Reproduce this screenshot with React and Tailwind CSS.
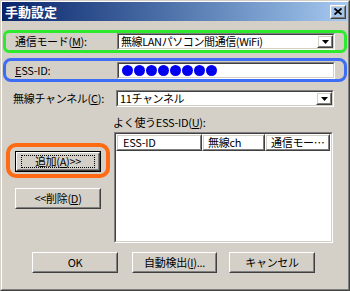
// 手動設定 dialog — Windows classic style, with annotation outlines

const FONT = "font-['Noto_Sans_CJK_JP','Noto_Sans',sans-serif]";

function Raised({ className = '', innerClassName = '', children }) {
  return (
    <div className={`border border-t-white border-l-white border-r-[#404040] border-b-[#404040] ${className}`}>
      <div className={`h-full w-full border border-t-[#d4d0c8] border-l-[#d4d0c8] border-r-[#808080] border-b-[#808080] flex items-center justify-center ${innerClassName}`}>
        {children}
      </div>
    </div>
  );
}

function Sunken({ className = '', children }) {
  return (
    <div className={`border border-t-[#808080] border-l-[#808080] border-r-white border-b-white ${className}`}>
      <div className="h-full w-full border border-t-[#404040] border-l-[#404040] border-r-[#d4d0c8] border-b-[#d4d0c8] bg-white flex items-center overflow-hidden">
        {children}
      </div>
    </div>
  );
}

function Combo({ value }) {
  return (
    <Sunken className="w-[218px] h-[17px]">
      <span className="flex-1 pl-[2px] text-[11px] tracking-[-0.4px] leading-none whitespace-nowrap">{value}</span>
      <Raised className="w-[16px] h-[13px] shrink-0">
        <svg width="7" height="4" viewBox="0 0 7 4">
          <path d="M0 0h7L3.5 4z" fill="#000" />
        </svg>
      </Raised>
    </Sunken>
  );
}

function U({ children }) {
  return <span className="underline underline-offset-1">{children}</span>;
}

export default function App() {
  return (
    <div className={`w-[350px] h-[291px] bg-[#d4d0c8] text-black ${FONT} border border-t-[#d4d0c8] border-l-[#d4d0c8] border-r-[#404040] border-b-[#404040]`}>
      <div className="h-full w-full border border-t-white border-l-white border-r-[#808080] border-b-[#808080] flex flex-col">
        {/* Title bar */}
        <div className="h-[19px] flex items-center justify-between bg-gradient-to-r from-[#0a246a] to-[#a6caf0] pl-[3px] pr-[2px]">
          <span className="text-white font-bold text-[13px] leading-none">手動設定</span>
          <Raised className="w-[16px] h-[14px]">
            <svg width="8" height="7" viewBox="0 0 8 7">
              <path d="M0.5 0.5L7.5 6.5M7.5 0.5L0.5 6.5" stroke="#000" strokeWidth="1.8" />
            </svg>
          </Raised>
        </div>

        {/* 通信モード */}
        <div className="mt-[9px] ml-[1px] w-[344px] h-[23px] border-[3px] border-[#2eea2e] rounded-[6px] flex items-center">
          <span className="w-[111px] pl-[9px] text-[11px] tracking-[-0.3px] leading-none whitespace-nowrap">通信モード(<U>M</U>):</span>
          <Combo value="無線LANパソコン間通信(WiFi)" />
        </div>

        {/* ESS-ID */}
        <div className="mt-[5px] ml-[1px] w-[344px] h-[24px] border-[3px] border-[#3d6cf5] rounded-[8px] flex items-center">
          <span className="w-[111px] pl-[9px] text-[11px] tracking-[-0.3px] leading-none whitespace-nowrap"><U>E</U>SS-ID:</span>
          <Sunken className="w-[218px] h-[17px]">
            <div className="flex gap-[1px] pl-[3px]">
              {Array.from({ length: 8 }).map((_, i) => (
                <span key={i} className="w-[11px] h-[11px] rounded-full bg-[#0000ee]" />
              ))}
            </div>
          </Sunken>
        </div>

        {/* 無線チャンネル */}
        <div className="mt-[8px] h-[17px] flex items-center">
          <span className="w-[114px] pl-[11px] text-[11px] tracking-[-0.3px] leading-none whitespace-nowrap">無線チャンネル(<U>C</U>):</span>
          <Combo value="11チャンネル" />
        </div>

        {/* Buttons + list */}
        <div className="mt-[8px] flex">
          <div className="w-[111px] flex flex-col">
            <div className="mt-[28px] ml-[4px] w-[104px] h-[35px] border-[4px] border-[#ff6a13] rounded-[10px] pl-[5px] pt-[4px]">
              <div className="w-[86px] h-[21px] border border-black">
                <Raised className="w-full h-full">
                  <div className="border border-dotted border-black w-[74px] h-[13px] flex items-center justify-center">
                    <span className="text-[11px] tracking-[-0.3px] leading-none">追加(<U>A</U>)&gt;&gt;</span>
                  </div>
                </Raised>
              </div>
            </div>
            <Raised className="mt-[10px] ml-[13px] w-[86px] h-[21px]">
              <span className="text-[11px] tracking-[-0.3px] leading-none">&lt;&lt;削除(<U>D</U>)</span>
            </Raised>
          </div>

          <div className="flex flex-col">
            <span className="h-[15px] text-[11px] tracking-[-0.3px] leading-[15px] whitespace-nowrap">よく使うESS-ID(<U>U</U>):</span>
            <div className="mt-[2px] ml-[1px] w-[219px] h-[111px] border border-t-[#808080] border-l-[#808080] border-r-white border-b-white">
              <div className="h-full w-full border border-t-[#404040] border-l-[#404040] border-r-[#d4d0c8] border-b-[#d4d0c8] bg-white">
                <div className="flex h-[17px]">
                  <Raised className="w-[86px] h-full" innerClassName="!justify-start pl-[5px]">
                    <span className="text-[11px] tracking-[-0.3px] leading-none">ESS-ID</span>
                  </Raised>
                  <Raised className="w-[63px] h-full" innerClassName="!justify-start pl-[4px]">
                    <span className="text-[11px] tracking-[-0.3px] leading-none">無線ch</span>
                  </Raised>
                  <Raised className="w-[65px] h-full" innerClassName="!justify-start pl-[4px]">
                    <span className="text-[11px] tracking-[-0.3px] leading-none whitespace-nowrap">通信モー…</span>
                  </Raised>
                </div>
              </div>
            </div>
          </div>
        </div>

        {/* Bottom buttons */}
        <div className="mt-[9px] ml-[30px] flex">
          <Raised className="w-[86px] h-[21px]">
            <span className="text-[11px] tracking-[-0.3px] leading-none">OK</span>
          </Raised>
          <Raised className="ml-[14px] w-[85px] h-[21px]">
            <span className="text-[11px] tracking-[-0.3px] leading-none">自動検出(<U>I</U>)...</span>
          </Raised>
          <Raised className="ml-[12px] w-[86px] h-[21px]">
            <span className="text-[11px] tracking-[-0.3px] leading-none">キャンセル</span>
          </Raised>
        </div>
      </div>
    </div>
  );
}
